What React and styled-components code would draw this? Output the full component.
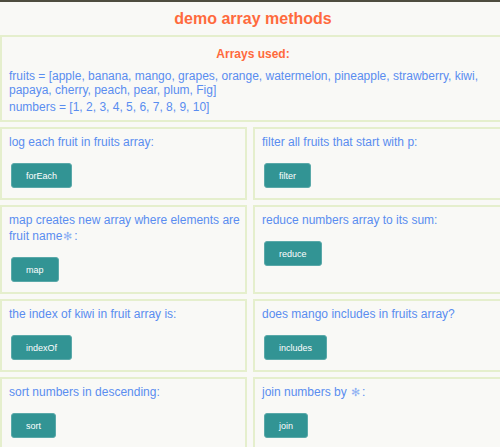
import styled, { createGlobalStyle } from "styled-components"

const Global = createGlobalStyle`
html, body {
  margin: 0;
  padding: 0;
  background: #f9f9f6;
  overflow: hidden;
}
body {
  border-top: 2px solid #4e4d3f;
  font-family: "Liberation Sans", Arial, sans-serif;
}
`

const cards = [
  { text: "log each fruit in fruits array:", btn: "forEach" },
  { text: "filter all fruits that start with p:", btn: "filter" },
  { text: "map creates new array where elements are fruit name", star: ":", btn: "map" },
  { text: "reduce numbers array to its sum:", btn: "reduce" },
  { text: "the index of kiwi in fruit array is:", btn: "indexOf" },
  { text: "does mango includes in fruits array?", btn: "includes" },
  { text: "sort numbers in descending:", btn: "sort" },
  { text: "join numbers by ", star: ":", btn: "join" },
]

export default function App() {
  return (
    <>
      <Global />
      <Page>
        <Title>demo array methods</Title>
        <Arrays>
          <SubTitle>Arrays used:</SubTitle>
          <Line>
            fruits = [apple, banana, mango, grapes, orange, watermelon, pineapple, strawberry, kiwi,
            papaya, cherry, peach, pear, plum, Fig]
          </Line>
          <Line>numbers = [1, 2, 3, 4, 5, 6, 7, 8, 9, 10]</Line>
        </Arrays>
        <Grid>
          {cards.map((c) => (
            <Card key={c.btn}>
              <Text>
                {c.text}
                {c.star && <><Star>✻</Star>{c.star}</>}
              </Text>
              <Button>{c.btn}</Button>
            </Card>
          ))}
        </Grid>
      </Page>
    </>
  )
}

const Page = styled.div`
width: 506px;
`

const Title = styled.h1`
margin: 0;
height: 33px;
line-height: 33px;
text-align: center;
font-size: 16px;
font-weight: bold;
color: #ff6a3d;
`

const Arrays = styled.div`
border: 2px solid #e5efcd;
padding: 9px 7px 3px;
`

const SubTitle = styled.h3`
margin: 0 0 7px;
text-align: center;
font-size: 12px;
line-height: 16px;
color: #ff6a3d;
`

const Line = styled.p`
margin: 0 0 3px;
font-size: 12px;
line-height: 14px;
color: #5a8df0;
`

const Grid = styled.div`
display: grid;
grid-template-columns: 247px 1fr;
gap: 5px 6px;
margin-top: 5px;
`

const Card = styled.div`
border: 2px solid #e5efcd;
padding: 5px 3px 10px 7px;
`

const Text = styled.p`
margin: 0 0 13px;
font-size: 12px;
line-height: 16px;
color: #5a8df0;
`

const Star = styled.span`
display: inline-block;
margin: 0 2px 0 1px;
color: #8fb1f3;
font-size: 11px;
`

const Button = styled.button`
height: 25px;
padding: 0 14px;
margin-left: 2px;
background: #329494;
color: #fff;
border: 1px solid #5aa9a9;
border-radius: 3px;
font-family: "Liberation Sans", Arial, sans-serif;
font-size: 9px;
`
